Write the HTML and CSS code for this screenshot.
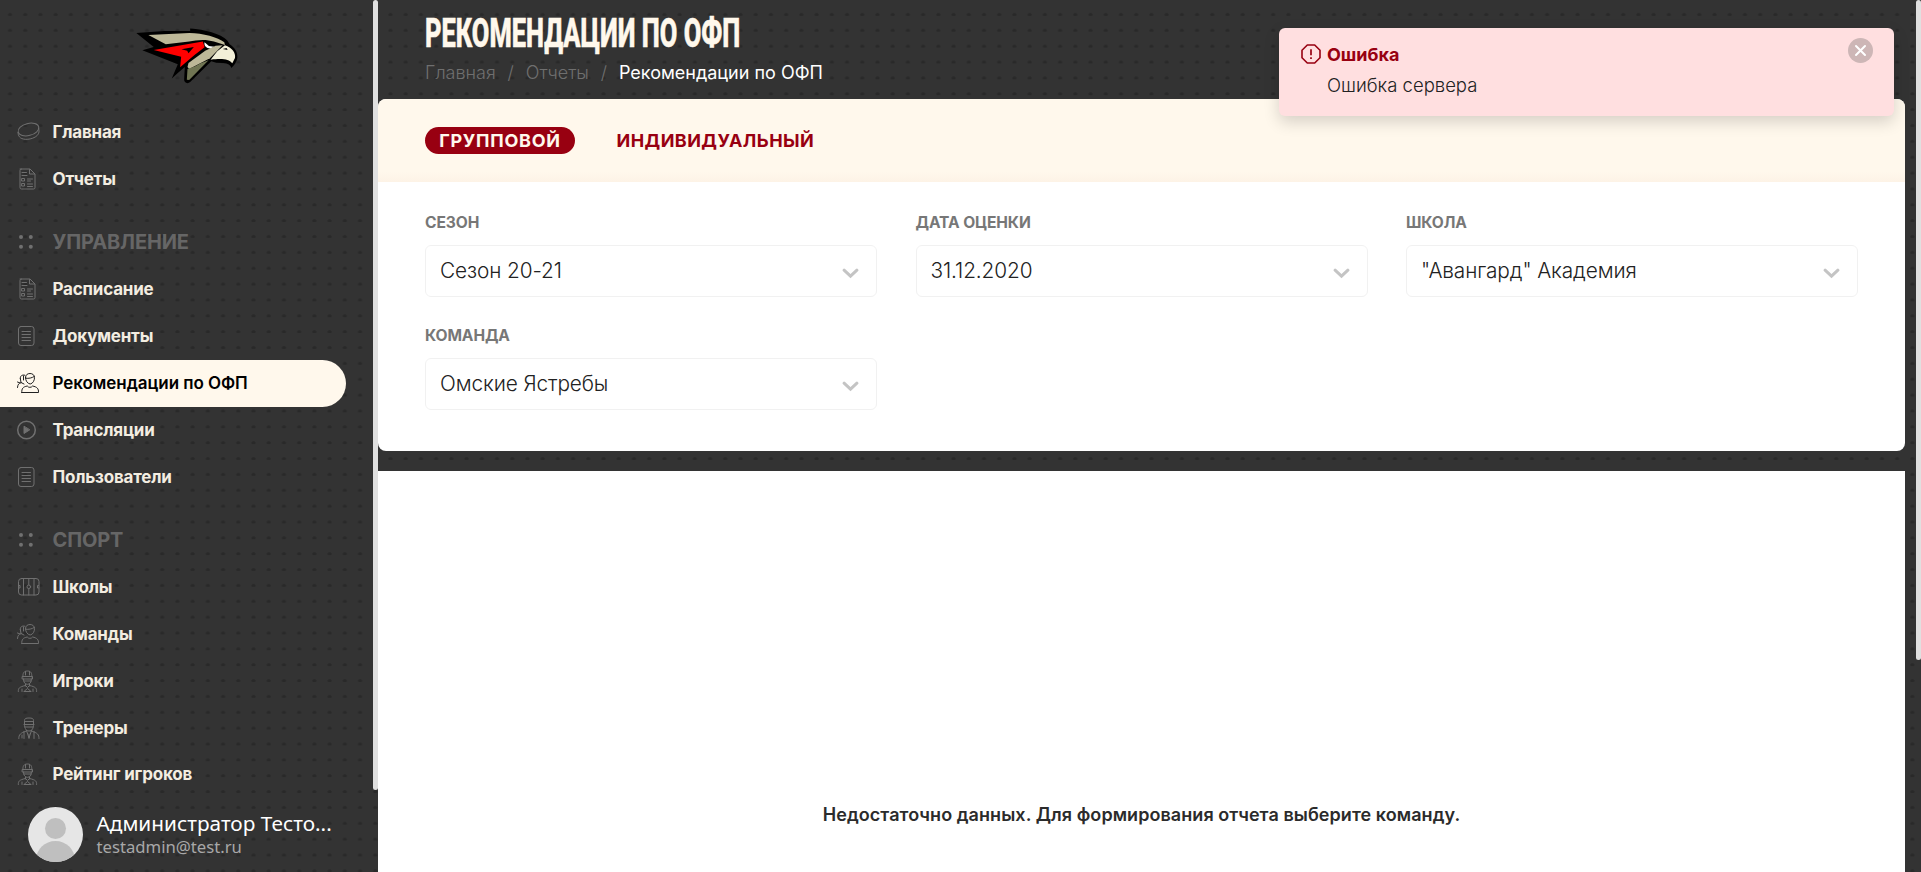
FILE: index.html
```
<!DOCTYPE html>
<html lang="ru">
<head>
<meta charset="utf-8">
<title>Рекомендации по ОФП</title>
<link rel="stylesheet" href="styles.css">
</head>
<body>
<svg class="sprite" aria-hidden="true">
  <symbol id="i-puck" viewBox="0 0 24 24"><ellipse cx="12.500" cy="9.500" rx="10.600" ry="6" transform="rotate(-14 12.500 9.500)"/><path d="M2 12.300c.1 2 .4 3.300 1.500 4.600 2.300 3 8.600 3 13.200 1.300 3.600-1.300 6.100-3.600 6.300-6.300 0-1.500-.1-2.600-.4-4"/></symbol>
  <symbol id="i-report" viewBox="0 0 24 24"><path d="M4 2h10l5 5v13.500a1.500 1.500 0 0 1-1.500 1.500h-12A1.500 1.500 0 0 1 4 20.500V3.500A1.500 1.500 0 0 1 5.500 2M13.500 2.500V7H18.500M6 5.500h4.500M6 8.500h5M11.500 12h5M11.500 14h3M11.500 17h5M11.500 19.500h5M6 11.500h2.500v2.500H6zM6 16.500h2.500V19H6z"/></symbol>
  <symbol id="i-doc" viewBox="0 0 24 24"><rect x="2.500" y="2.500" width="15.500" height="19" rx="2.500"/><path d="M6 7.500h8.500M6 10.500h8.500M6 13.500h8.500M6 16.500h8.500"/></symbol>
  <symbol id="i-team" viewBox="0 0 24 24"><path d="M5.800 21.500h16.700c.3-4-1.700-5.700-6-6.500-.9 1.800-4.300 1.800-5.200 0-4.300.8-5.800 2.500-5.500 6.500zM9.500 6.500c0-2.700 2-4 4.500-4s4.500 1.500 4.500 4.200-1.500 5.800-4.300 6.300c-2.800-.4-4.700-3.200-4.700-6.500zM9.500 7.200c3.500.6 6.200-.3 8.800-1.700M8.800 4.200C6 3.400 4 5 4.300 7.500M4.300 7.500 5 11.500 8 13M1.500 16.500c.3-3 1.200-4.500 3.700-5M1.500 11l2.500 1M7.500 5v4"/></symbol>
  <symbol id="i-play" viewBox="0 0 24 24"><circle cx="10.500" cy="12" r="8.800" stroke-width="1.500"/><path d="M8 8.500v7l5.500-3.500z" fill="currentColor"/></symbol>
  <symbol id="i-rink" viewBox="0 0 24 24"><rect x="2.500" y="3.500" width="20.500" height="16.500" rx="3"/><path d="M7.500 3.500v16.500M12.800 3.500v6M12.800 14V20M18 3.500v16.500M3 10.500h1v2.500H3M22.500 10.500h-1v2.500h1"/><circle cx="12.800" cy="11.800" r="1.800"/></symbol>
  <symbol id="i-player" viewBox="0 0 24 24"><path d="M7 8C6.500 4 8 2 11.500 2S16 4 15.800 8M9.500 2.500V6M13.500 2.500V6M6.500 7.500h10v2.500h-10zM7.500 10c0 3.500 1.500 5.300 4 5.300s3.900-1.800 3.900-5.300M8 12h7M9.500 15v2M13.500 15v2M2.300 22.500c-.2-3.500 1-4.500 7.200-6l2 2 2-2c6.200 1.500 7.300 2.500 7.100 6M6 22.500V20M17 22.500V20M8.500 22l3-2.500 3 2.500M8 22.500h7"/></symbol>
  <symbol id="i-coach" viewBox="0 0 24 24"><path d="M8.500 8V4.500C8.500 2.500 10 2 13 2s4.500.5 4.500 2.500V8M8.500 5.500h9M8 8.500h10M8.500 8.500c0 4 1.500 6.500 4.500 6.500s4.500-2.500 4.500-6.500M9 11h8M10.500 14.500 13 22l2.500-7.500M13 18v4.500M2.800 22.500c0-4 1.500-5.500 7.700-7.500M23 22.500c0-4-1.300-5.500-7.500-7.500M8 15.500v7M18 15.500v7M6 19v3"/></symbol>
  <symbol id="i-dots" viewBox="0 0 24 24"><g fill="currentColor" stroke="none"><circle cx="5" cy="7" r="2"/><circle cx="14.800" cy="7" r="2"/><circle cx="5" cy="16.800" r="2"/><circle cx="14.800" cy="16.800" r="2"/></g></symbol>
  <symbol id="i-chevron" viewBox="0 0 16 11"><path d="M1.600 2.200 8 8.200l6.400-6" stroke-width="3"/></symbol>
</svg>

<div class="app">
  <aside class="sidebar">
    <div class="menu">
      <div class="brand">
        <svg class="logo" viewBox="45 35 308 172">
          <path fill="#000" d="M46 52 L130 46 L207 46 V39 C250 42 298 54 318 75 L325 86 C340 96 350 110 348 127 C346 140 338 150 330 157 C328 148 320 143 306 142 L285 141 L270 137 L207 199 C199 206 188 201 189 190 L191 154 L170 172 L152 188 L170 146 L64 104 L98 94 Z"/>
          <path fill="#bdb898" d="M82 58 L205 52 C245 53 290 64 309 80 L311 88 L278 78 C255 70 225 73 204 78 L134 86 Z"/>
          <path fill="#f00" d="M98 103 L245 78 L250 95 L220 118 L177 155 L180 123 Z"/>
          <path fill="#000" d="M181 101 L218 94 L202 113 L198 105 Z"/>
          <path fill="#fff" d="M250 80 L263 91 L279 93 L268 99 C254 98 248 90 250 80 Z"/>
          <path fill="#bdb898" d="M283 90 L304 89 L266 128 L204 160 L199 154 L202 142 L252 105 Z"/>
          <path fill="#707553" d="M199 160 L222 152 L238 143 L262 134 L204 193 L197 192 Z"/>
          <path fill="#f3f0d8" d="M311 89 C332 96 344 112 341 127 L333 143 C322 130 304 128 268 132 L288 107 Z"/>
          <path fill="#000" d="M304 100 L316 97 L319 103 Z"/>
        </svg>
      </div>
      <a class="item"><svg class="ico"><use href="#i-puck"/></svg>Главная</a>
      <a class="item"><svg class="ico"><use href="#i-report"/></svg>Отчеты</a>
      <div class="group"><svg class="ico"><use href="#i-dots"/></svg>УПРАВЛЕНИЕ</div>
      <a class="item"><svg class="ico"><use href="#i-report"/></svg>Расписание</a>
      <a class="item"><svg class="ico"><use href="#i-doc"/></svg>Документы</a>
      <a class="item active"><svg class="ico"><use href="#i-team"/></svg>Рекомендации по ОФП</a>
      <a class="item"><svg class="ico"><use href="#i-play"/></svg>Трансляции</a>
      <a class="item"><svg class="ico"><use href="#i-doc"/></svg>Пользователи</a>
      <div class="group"><svg class="ico"><use href="#i-dots"/></svg>СПОРТ</div>
      <a class="item"><svg class="ico"><use href="#i-rink"/></svg>Школы</a>
      <a class="item"><svg class="ico"><use href="#i-team"/></svg>Команды</a>
      <a class="item"><svg class="ico"><use href="#i-player"/></svg>Игроки</a>
      <a class="item"><svg class="ico"><use href="#i-coach"/></svg>Тренеры</a>
      <a class="item"><svg class="ico"><use href="#i-player"/></svg>Рейтинг игроков</a>
    </div>
    <div class="user">
      <svg class="avatar" viewBox="0 0 55 55"><defs><clipPath id="av"><circle cx="27.500" cy="27.500" r="27.500"/></clipPath></defs><g clip-path="url(#av)"><rect width="55" height="55" fill="#e6e6e6"/><circle cx="27.500" cy="21.500" r="10.500" fill="#bfbfbf"/><ellipse cx="27.500" cy="53" rx="19.500" ry="19" fill="#bfbfbf"/></g></svg>
      <div>
        <div class="user-name">Администратор Тесто...</div>
        <div class="user-mail">testadmin@test.ru</div>
      </div>
    </div>
  </aside>
  <div class="side-scroll"></div>
  <main class="main">
    <header class="head">
      <h1 class="title">РЕКОМЕНДАЦИИ ПО ОФП</h1>
      <nav class="crumbs"><span>Главная</span><i>/</i><span>Отчеты</span><i>/</i><b>Рекомендации по ОФП</b></nav>
    </header>
    <section class="card">
      <div class="tabs"><a class="tab on">ГРУППОВОЙ</a><a class="tab">ИНДИВИДУАЛЬНЫЙ</a></div>
      <div class="filters">
        <div class="field"><div class="label">СЕЗОН</div><div class="select">Сезон 20-21<svg class="chev"><use href="#i-chevron"/></svg></div></div>
        <div class="field"><div class="label">ДАТА ОЦЕНКИ</div><div class="select">31.12.2020<svg class="chev"><use href="#i-chevron"/></svg></div></div>
        <div class="field"><div class="label">ШКОЛА</div><div class="select">"Авангард" Академия<svg class="chev"><use href="#i-chevron"/></svg></div></div>
        <div class="field"><div class="label">КОМАНДА</div><div class="select">Омские Ястребы<svg class="chev"><use href="#i-chevron"/></svg></div></div>
      </div>
    </section>
    <section class="report">Недостаточно данных. Для формирования отчета выберите команду.</section>
  </main>
  <div class="page-scroll"></div>
</div>

<div class="toast">
  <svg class="toast-ico" viewBox="0 0 20 20"><path d="M6.300 1h7.400L19 6.300v7.400L13.700 19H6.300L1 13.700V6.300z" fill="none" stroke="#980011" stroke-width="1.600" stroke-linejoin="round"/><path d="M10 5.200v6M10 13.300v1.700" stroke="#980011" stroke-width="1.700"/></svg>
  <div class="toast-body"><div class="toast-title">Ошибка</div><div class="toast-text">Ошибка сервера</div></div>
  <svg class="toast-close" viewBox="0 0 25 25"><circle cx="12.500" cy="12.500" r="12.500" fill="#cdb6b6"/><path d="M8 8l9 9M17 8l-9 9" stroke="#fff" stroke-width="2" stroke-linecap="round"/></svg>
</div>
</body>
</html>
```

FILE: styles.css
```
* { box-sizing: border-box; }
body {
  margin: 0;
  height: 872px;
  overflow: hidden;
  font-family: Inter, "Liberation Sans", sans-serif;
  background: #333 radial-gradient(ellipse 2.600px 2px at 10px 14.700px, #292929 60%, rgba(41,41,41,0) 100%) 0 0 / 15.220px 15.870px;
}
.sprite { position: absolute; width: 0; height: 0; }
.app { display: flex; height: 872px; overflow: hidden; }

/* sidebar */
.sidebar { width: 373px; display: flex; flex-direction: column; }
.menu { height: 790px; overflow: hidden; }
.brand { height: 109px; padding: 27px 0 0 136px; }
.logo { display: block; width: 103px; height: 58px; }
.item, .group { display: flex; align-items: center; padding-left: 16px; color: #f3ede1; }
.item { height: 46.800px; font-size: 17px; font-weight: 700; letter-spacing: -.2px; }
.item.active { width: 346px; height: 47px; border-radius: 0 24px 24px 0; background: #fff8ec; color: #000; font-weight: 600; letter-spacing: -.05px; }
.group { height: 63.500px; padding-top: 16px; font-size: 20px; font-weight: 700; letter-spacing: -.15px; color: #666; }
.ico { flex: none; width: 24px; height: 24px; margin-right: 12.500px; color: #707070; fill: none; stroke: currentColor; stroke-width: 1; stroke-linecap: round; stroke-linejoin: round; }
.active .ico { color: #222; }
.user { display: flex; align-items: center; height: 82px; padding: 4px 0 0 28px; gap: 13.500px; font-family: "Noto Sans", sans-serif; }
.avatar { width: 55px; height: 55px; margin-top: 2px; }
.user-name { font-size: 20.800px; line-height: 26px; color: #fff; white-space: nowrap; }
.user-mail { font-size: 16.700px; line-height: 21px; color: #a8a8a8; }
.side-scroll { width: 5px; height: 790px; border-radius: 3px; background: #e0e0e0; }

/* content */
.main { width: 1527px; margin-right: 11px; display: flex; flex-direction: column; }
.head { height: 99px; padding: 9px 0 0 47px; }
.title { margin: 0; width: 500px; font: 800 41px/48px Roboto, sans-serif; color: #fff8ec; transform: scaleX(.621); transform-origin: 0 0; white-space: nowrap; -webkit-text-stroke: .6px #fff8ec; }
.crumbs { display: flex; align-items: center; margin-top: 4px; height: 22px; font-size: 18px; font-weight: 300; color: #6f6f6f; white-space: nowrap; }
.crumbs i { width: 30px; text-align: center; font-style: normal; }
.crumbs b { font-weight: 400; color: #fff; }
.card { height: 352px; border-radius: 8px; background: #fff; overflow: hidden; }
.tabs { display: flex; align-items: center; gap: 28px; height: 83px; padding-left: 47px; background: linear-gradient(#fff8ec 88%, #fdf3e6); }
.tab { height: 27px; padding: 0 13.500px; border-radius: 14px; font-size: 18px; font-weight: 700; line-height: 28px; letter-spacing: .45px; color: #980011; }
.tab.on { width: 150px; padding: 0; text-align: center; background: #980011; color: #fff8ec; letter-spacing: .75px; }
.filters { display: grid; grid-template-columns: repeat(3, 452px); column-gap: 38.500px; row-gap: 29px; padding: 31px 0 0 47px; }
.label { height: 32px; font-size: 15.600px; font-weight: 700; line-height: 20px; color: #777; letter-spacing: -.1px; }
.select { display: flex; align-items: center; justify-content: space-between; height: 52px; padding: 0 17px 2px 14px; border: 1px solid #f1f1f1; border-radius: 6px; font-size: 20.800px; font-weight: 300; color: #222; letter-spacing: -.1px; }
.chev { width: 17px; height: 11px; margin-top: 6px; fill: none; stroke: #c4c4c4; stroke-linecap: round; }
.report { margin-top: 20px; flex: 1; padding-top: 333px; background: #fff; text-align: center; font-size: 18px; font-weight: 600; line-height: 22px; letter-spacing: .06px; color: #2b2b2b; }
.page-scroll { width: 5px; height: 660px; border-radius: 3px; background: #e0e0e0; }

/* notification over the page */
.toast { position: absolute; left: 1279px; top: 28px; width: 615px; height: 88px; display: flex; align-items: flex-start; padding: 16px 21px 0 22px; border-radius: 6px; background: #ffdfe0; box-shadow: 0 6px 16px rgba(0,0,0,.16); }
.toast-ico { width: 20px; height: 20px; }
.toast-body { flex: 1; padding-left: 6px; }
.toast-title { font-size: 18px; font-weight: 700; line-height: 22px; color: #980011; }
.toast-text { margin-top: 8px; font-size: 18.500px; font-weight: 300; line-height: 23px; color: #222; }
.toast-close { width: 25px; height: 25px; margin-top: -6px; }
```
